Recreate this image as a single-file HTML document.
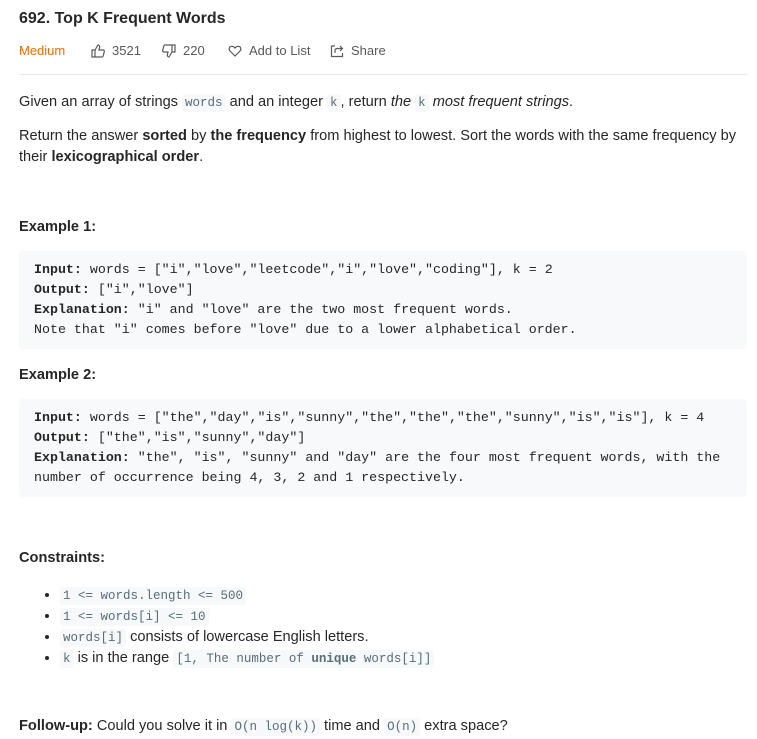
<!DOCTYPE html>
<html><head><style>
body{margin:0;background:#fff;font-family:"Liberation Sans",sans-serif;color:#262626;font-size:14.6px;}
.w{position:absolute;left:19px;width:728px;}
h1{position:absolute;left:19px;top:10px;margin:0;font-size:16px;font-weight:600;color:#262626;}
.meta{position:absolute;left:19px;top:43px;width:700px;height:16px;font-size:13px;color:#595959;}
.meta span{position:absolute;top:0;height:16px;line-height:16px;display:inline-flex;align-items:center;white-space:nowrap}
.meta svg{margin-right:7px}
.hr{position:absolute;left:19px;top:74px;width:728px;height:1px;background:#e8e8e8}
p{margin:0;line-height:22px}
code{font-family:"Liberation Mono",monospace;font-size:12.5px;background:#f7f8fa;color:#546e7a;padding:2px 3px;border-radius:3px}
pre{margin:0;background:#f7f9fa;border-radius:3px;padding:9px 15px;font-family:"Liberation Mono",monospace;font-size:13.3px;line-height:20px;color:#262626}
b{font-weight:bold}
ul{margin:0;padding-left:60px}
li{margin:0;height:21px;line-height:21px}
</style></head><body>
<h1>692. Top K Frequent Words</h1>
<div class="meta">
<span style="color:#ef6c00;left:0">Medium</span>
<span style="left:72px"><svg width="14" height="14" viewBox="0 0 14 14" fill="none" stroke="#595959" stroke-width="1.2"><path d="M1 6h3v7H1zM4 6l3-5c1 0 2 1 1.6 2.5L8 6h4c1 0 1.5.8 1.3 1.6l-1.2 4.6c-.2.5-.6.8-1.1.8H4"/></svg>3521</span>
<span style="left:143px"><svg width="14" height="14" viewBox="0 0 14 14" fill="none" stroke="#595959" stroke-width="1.2"><path d="M13 8h-3V1h3zM10 8l-3 5c-1 0-2-1-1.6-2.5L6 8H2c-1 0-1.5-.8-1.3-1.6l1.2-4.6C2.1 1.3 2.5 1 3 1h7"/></svg>220</span>
<span style="left:209px"><svg width="14" height="14" viewBox="0 0 14 14" fill="none" stroke="#595959" stroke-width="1.2"><path d="M7 12L2 7C.5 5.5 1 2.5 3.5 2.3 5 2.2 6.3 3 7 4c.7-1 2-1.8 3.5-1.7C13 2.5 13.5 5.5 12 7z"/></svg>Add to List</span>
<span style="left:311px"><svg width="14" height="14" viewBox="0 0 14 14" fill="none" stroke="#595959" stroke-width="1.2"><path d="M5 2H1.5v10.5h11V9M5 9V6.5C5 5 6 4.5 8 4.5h4M10 2l2.5 2.5L10 7"/></svg>Share</span>
</div>
<div class="hr"></div>
<div class="w" style="top:91px">
<p>Given an array of strings <code>words</code> and an integer <code>k</code>, return <i>the </i><code>k</code><i> most frequent strings</i>.</p>
<p style="margin-top:12px;line-height:21px">Return the answer <b>sorted</b> by <b>the frequency</b> from highest to lowest. Sort the words with the same frequency by their <b>lexicographical order</b>.</p>
</div>
<div class="w" style="top:216px"><p><b>Example 1:</b></p></div>
<div class="w" style="top:251px"><pre><b>Input:</b> words = ["i","love","leetcode","i","love","coding"], k = 2
<b>Output:</b> ["i","love"]
<b>Explanation:</b> "i" and "love" are the two most frequent words.
Note that "i" comes before "love" due to a lower alphabetical order.</pre></div>
<div class="w" style="top:364px"><p><b>Example 2:</b></p></div>
<div class="w" style="top:399px"><pre><b>Input:</b> words = ["the","day","is","sunny","the","the","the","sunny","is","is"], k = 4
<b>Output:</b> ["the","is","sunny","day"]
<b>Explanation:</b> "the", "is", "sunny" and "day" are the four most frequent words, with the
number of occurrence being 4, 3, 2 and 1 respectively.</pre></div>
<div class="w" style="top:547px"><p><b>Constraints:</b></p></div>
<div class="w" style="left:0;top:585px"><ul>
<li><code>1 &lt;= words.length &lt;= 500</code></li>
<li><code>1 &lt;= words[i] &lt;= 10</code></li>
<li><code>words[i]</code> consists of lowercase English letters.</li>
<li><code>k</code> is in the range <code>[1, The number of <b>unique</b> words[i]]</code></li>
</ul></div>
<div class="w" style="top:715px"><p><b>Follow-up:</b> Could you solve it in <code>O(n log(k))</code> time and <code>O(n)</code> extra space?</p></div>
</body></html>
